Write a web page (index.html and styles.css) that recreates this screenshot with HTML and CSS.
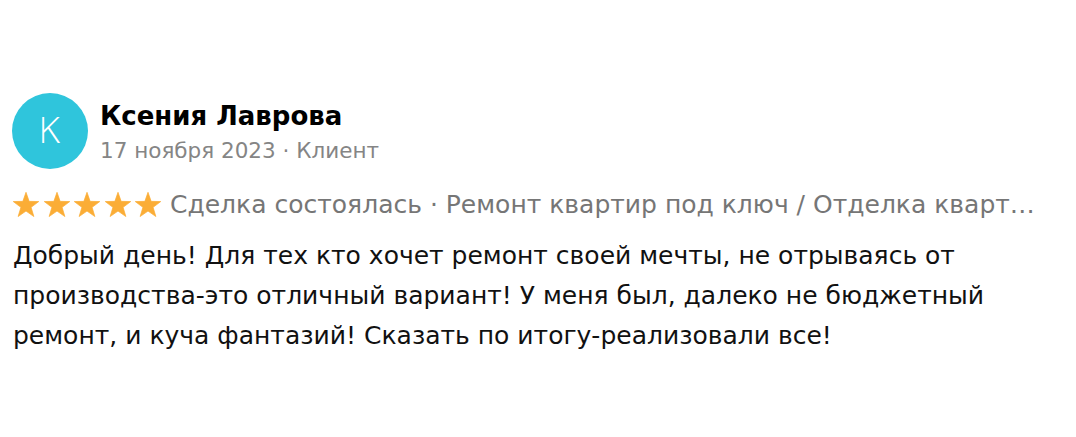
FILE: index.html
```html
<!DOCTYPE html>
<html lang="ru">
<head>
<meta charset="utf-8">
<link rel="stylesheet" href="styles.css">
</head>
<body>
<div class="review">
  <div class="head">
    <div class="avatar">К</div>
    <div class="who">
      <div class="name">Ксения Лаврова</div>
      <div class="meta">17 ноября 2023 · Клиент</div>
    </div>
  </div>
  <div class="rating">
    <div class="stars">
      <svg viewBox="0 0 24 24" class="star"><path d="M12 1.1L14.7 8.88L22.94 9.05L16.37 14.02L18.76 21.9L12 17.2L5.24 21.9L7.63 14.02L1.06 9.05L9.3 8.88Z"/></svg>
      <svg viewBox="0 0 24 24" class="star"><path d="M12 1.1L14.7 8.88L22.94 9.05L16.37 14.02L18.76 21.9L12 17.2L5.24 21.9L7.63 14.02L1.06 9.05L9.3 8.88Z"/></svg>
      <svg viewBox="0 0 24 24" class="star"><path d="M12 1.1L14.7 8.88L22.94 9.05L16.37 14.02L18.76 21.9L12 17.2L5.24 21.9L7.63 14.02L1.06 9.05L9.3 8.88Z"/></svg>
      <svg viewBox="0 0 24 24" class="star"><path d="M12 1.1L14.7 8.88L22.94 9.05L16.37 14.02L18.76 21.9L12 17.2L5.24 21.9L7.63 14.02L1.06 9.05L9.3 8.88Z"/></svg>
      <svg viewBox="0 0 24 24" class="star"><path d="M12 1.1L14.7 8.88L22.94 9.05L16.37 14.02L18.76 21.9L12 17.2L5.24 21.9L7.63 14.02L1.06 9.05L9.3 8.88Z"/></svg>
    </div>
    <div class="deal">Сделка состоялась · Ремонт квартир под ключ / Отделка квартир в новостройке</div>
  </div>
  <p class="text">Добрый день! Для тех кто хочет ремонт своей мечты, не отрываясь от производства-это отличный вариант! У меня был, далеко не бюджетный ремонт, и куча фантазий! Сказать по итогу-реализовали все!</p>
</div>
</body>
</html>
```
FILE: styles.css
```css
html, body { margin: 0; background: #fff; }
body { font-family: "DejaVu Sans", "Noto Sans", sans-serif; color: #111; }
.review { padding: 93px 0 0 12px; }
.head { display: flex; align-items: flex-start; gap: 12px; }
.avatar { width: 76px; height: 76px; border-radius: 50%; background: #2fc5dc; color: #fff; flex: none;
  display: flex; align-items: center; justify-content: center; font-size: 36px; font-weight: 200; line-height: 1; }
.who { display: flex; flex-direction: column; gap: 7px; padding-top: 8px; }
.name { font-size: 26px; font-weight: 700; color: #000; line-height: 30px; }
.meta { font-size: 21.5px; color: #858585; line-height: 26px; }
.rating { display: flex; align-items: flex-start; gap: 8px; margin-top: 21px; width: 1036px; }
.stars { display: flex; gap: 2.5px; flex: none; padding-top: 1px; }
.star { width: 28px; height: 28px; fill: #fbad36; stroke: #fbad36; stroke-width: 0.6; stroke-linejoin: round; }
.deal { flex: 1; min-width: 0; font-size: 25px; line-height: 30px; color: #767676; white-space: nowrap; overflow: hidden; text-overflow: ellipsis; }
.text { margin: 16px 0 0 1px; width: 1000px; font-size: 25px; line-height: 40px; color: #111; }
```
